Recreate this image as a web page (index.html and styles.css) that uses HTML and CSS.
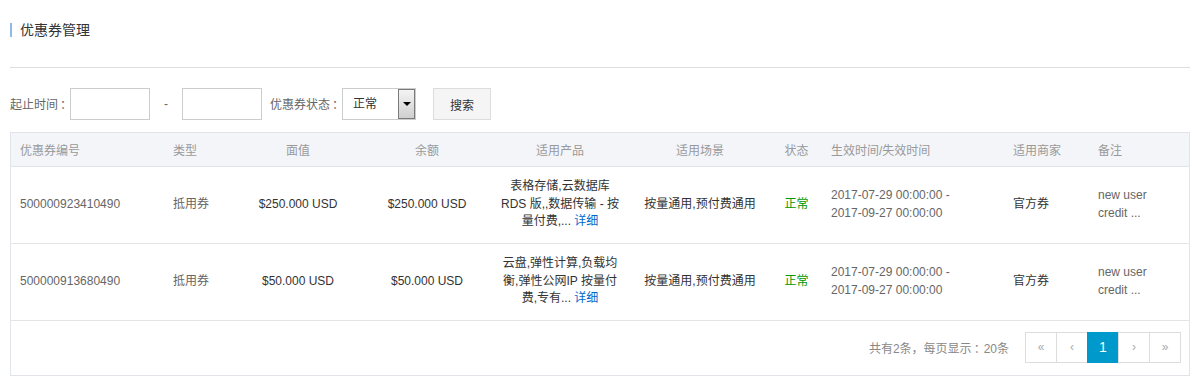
FILE: index.html
```html
<!DOCTYPE html>
<html lang="zh-CN">
<head>
<meta charset="utf-8">
<title>优惠券管理</title>
<link rel="stylesheet" href="styles.css">
</head>
<body>
<div class="page">
  <h2 class="title">优惠券管理</h2>
  <div class="divider"></div>
  <div class="filter">
    <label class="lbl">起止时间<span class="colon">：</span></label>
    <input class="inp" type="text">
    <span class="dash">-</span>
    <input class="inp" type="text">
    <label class="lbl lbl-state">优惠券状态<span class="colon">：</span></label>
    <div class="select">
      <span class="select-val">正常</span>
      <span class="select-btn"><span class="tri"></span></span>
    </div>
    <button class="btn">搜索</button>
  </div>
  <div class="grid">
    <table class="tbl">
      <colgroup>
        <col class="c1"><col class="c2"><col class="c3"><col class="c4"><col class="c5">
        <col class="c6"><col class="c7"><col class="c8"><col class="c9"><col class="c10">
      </colgroup>
      <thead>
        <tr>
          <th class="l">优惠券编号</th>
          <th class="l">类型</th>
          <th>面值</th>
          <th>余额</th>
          <th>适用产品</th>
          <th>适用场景</th>
          <th>状态</th>
          <th class="l">生效时间/失效时间</th>
          <th class="l">适用商家</th>
          <th class="l">备注</th>
        </tr>
      </thead>
      <tbody>
        <tr>
          <td class="l grey">500000923410490</td>
          <td class="l grey">抵用券</td>
          <td>$250.000 USD</td>
          <td>$250.000 USD</td>
          <td class="prod">表格存储,云数据库 RDS 版,,数据传输 - 按量付费,... <a class="link" href="#">详细</a></td>
          <td>按量通用,预付费通用</td>
          <td class="ok">正常</td>
          <td class="l grey">2017-07-29 00:00:00 -<br>2017-09-27 00:00:00</td>
          <td class="l">官方券</td>
          <td class="l grey remark">new user credit ...</td>
        </tr>
        <tr>
          <td class="l grey">500000913680490</td>
          <td class="l grey">抵用券</td>
          <td>$50.000 USD</td>
          <td>$50.000 USD</td>
          <td class="prod">云盘,弹性计算,负载均衡,弹性公网IP 按量付费,专有... <a class="link" href="#">详细</a></td>
          <td>按量通用,预付费通用</td>
          <td class="ok">正常</td>
          <td class="l grey">2017-07-29 00:00:00 -<br>2017-09-27 00:00:00</td>
          <td class="l">官方券</td>
          <td class="l grey remark">new user credit ...</td>
        </tr>
      </tbody>
    </table>
    <div class="foot">
      <span class="total">共有2条，每页显示<span class="colon">：</span>20条</span>
      <ul class="pager">
        <li><a href="#">«</a></li>
        <li><a href="#">‹</a></li>
        <li class="on"><a href="#">1</a></li>
        <li><a href="#">›</a></li>
        <li><a href="#">»</a></li>
      </ul>
    </div>
  </div>
</div>
</body>
</html>
```

FILE: styles.css
```css
* { box-sizing: border-box; }
html, body { margin: 0; padding: 0; background: #fff; }
body {
  font-family: "Liberation Sans", "Noto Sans CJK SC", sans-serif;
  font-size: 12px;
  color: #333;
}
.page { width: 1180px; margin-left: 10px; padding-top: 23px; }
.title {
  margin: 0;
  height: 14px;
  line-height: 14px;
  font-size: 14px;
  font-weight: normal;
  color: #333;
  border-left: 2px solid #8dbbe3;
  padding-left: 8px;
}
.divider { margin-top: 30px; border-top: 1px solid #dedede; }
.filter {
  margin-top: 20px;
  height: 32px;
  display: flex;
  align-items: center;
}
.filter > * { flex: none; }
.lbl { color: #666; font-size: 12px; line-height: 32px; white-space: nowrap; }
.colon {
  font-family: "Noto Sans CJK TC", "Noto Sans CJK SC", sans-serif;
  padding-left: 2px;
  margin-right: -2px;
}
.lbl-state { margin-left: 8px; }
.inp {
  width: 80px;
  height: 32px;
  border: 1px solid #ccc;
  padding: 0 6px;
  margin: 0;
  font: inherit;
}
.dash { width: 32px; text-align: center; color: #666; }
.select {
  width: 74px;
  height: 32px;
  border: 1px solid #ccc;
  display: flex;
  align-items: stretch;
  justify-content: space-between;
}
.select-val { padding-left: 10px; line-height: 30px; color: #333; font-size: 12px; }
.select-btn {
  width: 17px;
  border: 1px solid #7a7a7a;
  background: linear-gradient(#f4f4f4, #cfcfcf);
  display: flex;
  align-items: center;
  justify-content: center;
}
.tri {
  width: 0; height: 0;
  border-left: 4px solid transparent;
  border-right: 4px solid transparent;
  border-top: 4px solid #000;
}
.btn {
  margin-left: 17px;
  width: 58px;
  height: 32px;
  border: 1px solid #dcdcdc;
  background: #f5f5f5;
  font: inherit;
  font-size: 12px;
  color: #333;
  padding: 0;
}
.grid {
  margin-top: 12px;
  border: 1px solid #e1e4e8;
}
.tbl {
  width: 100%;
  border-collapse: collapse;
  table-layout: fixed;
}
.c1 { width: 153px; }
.c2 { width: 69px; }
.c3 { width: 130px; }
.c4 { width: 128px; }
.c5 { width: 138px; }
.c6 { width: 142px; }
.c7 { width: 51px; }
.c8 { width: 182px; }
.c9 { width: 85px; }
.c10 { width: 100px; }
.tbl th {
  height: 33px;
  background: #f4f5f9;
  color: #999;
  font-weight: normal;
  text-align: center;
  padding: 0 9px;
  border-bottom: 1px solid #e1e4e8;
  white-space: nowrap;
}
.tbl td {
  height: 77px;
  padding: 0 9px;
  text-align: center;
  vertical-align: middle;
  line-height: 17.5px;
  border-bottom: 1px solid #e5e5e5;
  color: #333;
}
.tbl .l { text-align: left; }
.tbl .grey { color: #666; }
.tbl .ok { color: #090; }
.tbl .remark { padding-right: 24px; }
.link { color: #0066cc; text-decoration: none; }
.foot {
  display: flex;
  justify-content: flex-end;
  align-items: center;
  padding: 11px 8px 12px 0;
}
.total { color: #888; margin-right: 16px; white-space: nowrap; }
.pager {
  list-style: none;
  margin: 0;
  padding: 0;
  display: flex;
}
.pager li a {
  display: block;
  width: 32px;
  height: 31px;
  line-height: 29px;
  text-align: center;
  border: 1px solid #ddd;
  margin-left: -1px;
  color: #aaa;
  text-decoration: none;
  font-size: 12px;
}
.pager li:first-child a { margin-left: 0; }
.pager li.on a {
  background: #0099cc;
  border-color: #0099cc;
  color: #fff;
  font-size: 14px;
}
```
